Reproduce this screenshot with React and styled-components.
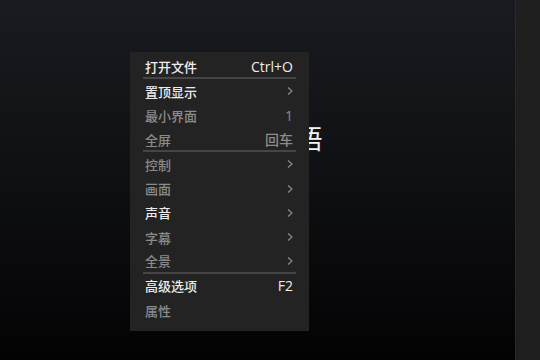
import React from 'react'
import styled, { createGlobalStyle } from 'styled-components'

const GlobalStyle = createGlobalStyle`
  html, body, #root {
    margin: 0;
    padding: 0;
    width: 100%;
    height: 100%;
  }
  body {
    background: #000;
    font-family: "Noto Sans CJK SC", "Noto Sans", sans-serif;
    overflow: hidden;
  }
`

const Page = styled.div`
  width: 540px;
  height: 360px;
  display: flex;
`

const Stage = styled.div`
  position: relative;
  flex: 1;
  display: flex;
  justify-content: center;
  align-items: flex-start;
  padding-top: 125px;
  box-sizing: border-box;
  background: linear-gradient(to bottom, #1a1b20 0%, #101114 45%, #030304 100%);
`

const Title = styled.div`
  color: #f4f4f4;
  font-size: 26px;
  line-height: 26px;
  font-weight: 400;
`

const SidePanel = styled.div`
  width: 25px;
  background: #1f1f1f;
  border-left: 1px solid #2a2a2a;
  box-sizing: border-box;
`

const Menu = styled.div`
  position: absolute;
  left: 130px;
  top: 52px;
  width: 179px;
  padding: 3px 0 9px;
  background: #232323;
  box-sizing: border-box;
`

const Row = styled.div`
  height: 24.3px;
  margin: 0 13px;
  padding: 0 3px 0 2px;
  display: flex;
  align-items: center;
  justify-content: space-between;
  box-sizing: border-box;
  font-size: 13px;
  font-weight: 500;
  color: ${p => (p.$active ? '#ededed' : '#8b8b8b')};
  border-bottom: ${p => (p.$divider ? '2px solid #454545' : 'none')};
`

const Hint = styled.span`
  font-family: "Open Sans", "Noto Sans CJK SC", sans-serif;
  font-size: 14px;
  font-weight: 500;
`

const Chevron = () => (
  <svg width="6" height="10" viewBox="0 0 6 10">
    <polyline points="1,1.5 5,5 1,8.5" fill="none" stroke="#8b8b8b" strokeWidth="1.2" />
  </svg>
)

const items = [
  { label: '打开文件', hint: 'Ctrl+O', active: true, divider: true },
  { label: '置顶显示', sub: true, active: true },
  { label: '最小界面', hint: '1' },
  { label: '全屏', hint: '回车', divider: true },
  { label: '控制', sub: true },
  { label: '画面', sub: true },
  { label: '声音', sub: true, active: true },
  { label: '字幕', sub: true },
  { label: '全景', sub: true, divider: true },
  { label: '高级选项', hint: 'F2', active: true },
  { label: '属性' },
]

const App = () => (
  <Page>
    <GlobalStyle />
    <Stage>
      <Title>中文与英语</Title>
      <Menu>
        {items.map(it => (
          <Row key={it.label} $active={it.active} $divider={it.divider}>
            <span>{it.label}</span>
            {it.hint && <Hint>{it.hint}</Hint>}
            {it.sub && <Chevron />}
          </Row>
        ))}
      </Menu>
    </Stage>
    <SidePanel />
  </Page>
)

export default App
